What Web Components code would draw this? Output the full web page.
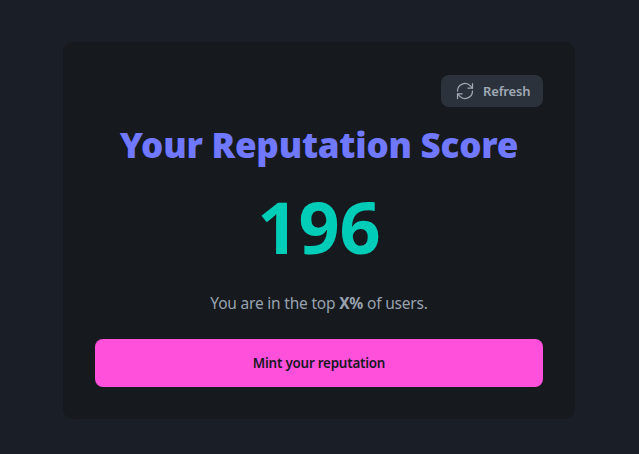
<!DOCTYPE html>
<html>
<head>
<meta charset="utf-8">
<style>
html, body { margin: 0; height: 100%; background: #191e27; }
body { font-family: "Noto Sans", "Open Sans", sans-serif; }
</style>
</head>
<body>
<score-page>
  <reputation-card score="196">
    <refresh-button slot="action">Refresh</refresh-button>
    You are in the top <b>X%</b> of users.
    <mint-button slot="footer">Mint your reputation</mint-button>
  </reputation-card>
</score-page>

<script>
class ScorePage extends HTMLElement {
  constructor() {
    super();
    this.attachShadow({mode: 'open'}).innerHTML = `
      <style>
        :host { display: flex; justify-content: center; box-sizing: border-box; padding: 42px 1px 0 0; height: 454px; }
      </style>
      <slot></slot>
    `;
  }
}

class ReputationCard extends HTMLElement {
  constructor() {
    super();
    this.attachShadow({mode: 'open'}).innerHTML = `
      <style>
        :host { display: flex; flex-direction: column; box-sizing: border-box; width: 512px; height: 377px; padding: 33px 32px 32px; background: #16191e; border-radius: 10px; }
        .top { display: flex; justify-content: flex-end; }
        h1 { margin: 16px 0 0; text-align: center; font-size: 35px; letter-spacing: -0.22px; line-height: 44px; font-weight: 900; color: #7078ff; }
        .score { margin-top: 14px; text-align: center; font-size: 72px; line-height: 90px; font-weight: 700; color: #00cdb8; }
        .note { margin-top: 20px; text-align: center; font-size: 15.5px; letter-spacing: -0.2px; line-height: 24px; color: #98a2ae; }
        .foot { margin-top: 24px; }
      </style>
      <div class="top"><slot name="action"></slot></div>
      <h1>Your Reputation Score</h1>
      <div class="score"></div>
      <div class="note"><slot></slot></div>
      <div class="foot"><slot name="footer"></slot></div>
    `;
  }
  connectedCallback() {
    this.shadowRoot.querySelector('.score').textContent = this.getAttribute('score');
  }
}

class RefreshButton extends HTMLElement {
  constructor() {
    super();
    this.attachShadow({mode: 'open'}).innerHTML = `
      <style>
        :host { display: flex; align-items: center; gap: 8px; box-sizing: border-box; width: 102px; height: 32px; padding: 0 12px 0 14px; background: #2b323b; border-radius: 8px; color: #a0aab6; font-size: 13px; letter-spacing: -0.15px; font-weight: 600; }
        svg { width: 20px; height: 20px; fill: none; stroke: currentColor; stroke-width: 1.5; stroke-linecap: round; stroke-linejoin: round; flex: none; }
      </style>
      <svg viewBox="0 0 24 24"><path d="M3 12a9 9 0 0 1 15.5-6.2L21 8.5"/><path d="M21 3v5.5h-5.5"/><path d="M21 12a9 9 0 0 1-15.5 6.2L3 15.5"/><path d="M3 21v-5.5h5.5"/></svg>
      <slot></slot>
    `;
  }
}

class MintButton extends HTMLElement {
  constructor() {
    super();
    this.attachShadow({mode: 'open'}).innerHTML = `
      <style>
        :host { display: flex; align-items: center; justify-content: center; height: 48px; background: #ff50dc; border-radius: 8px; color: #16191e; font-size: 13.4px; letter-spacing: -0.22px; font-weight: 600; }
      </style>
      <slot></slot>
    `;
  }
}

customElements.define('score-page', ScorePage);
customElements.define('reputation-card', ReputationCard);
customElements.define('refresh-button', RefreshButton);
customElements.define('mint-button', MintButton);
</script>
</body>
</html>
